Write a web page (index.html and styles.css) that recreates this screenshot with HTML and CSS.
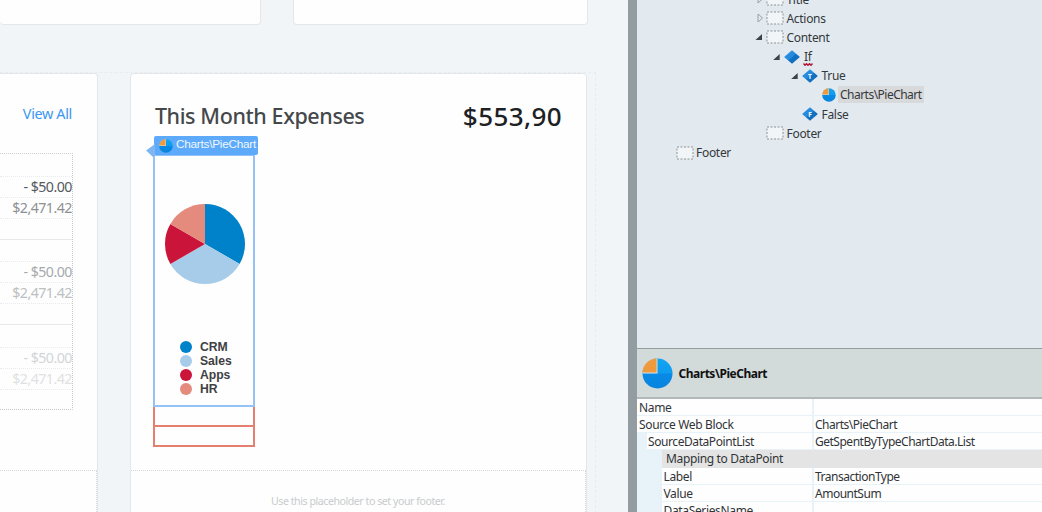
FILE: index.html
```html
<!DOCTYPE html>
<html lang="en">
<head>
<meta charset="utf-8">
<title>Charts\PieChart</title>
<link rel="stylesheet" href="styles.css">
</head>
<body>
<svg class="defs" width="0" height="0">
  <defs>
    <linearGradient id="blue" x1="0" y1="0" x2="0" y2="1"><stop offset="0" stop-color="#12a4f3"/><stop offset=".49" stop-color="#0f9bee"/><stop offset=".51" stop-color="#088ae6"/><stop offset="1" stop-color="#0784de"/></linearGradient>
    <linearGradient id="gem" x1="0" y1="0" x2="1" y2="1"><stop offset="0" stop-color="#2b95e6"/><stop offset=".5" stop-color="#2388dc"/><stop offset=".52" stop-color="#1272c4"/><stop offset="1" stop-color="#0f68b6"/></linearGradient>
    <symbol id="pie" viewBox="0 0 32 32"><circle cx="16" cy="16" r="15.5" fill="url(#blue)"/><path d="M.5 16A15.5 15.5 0 0 1 16 .5V16Z" fill="#d3e3ea"/><path d="M15 .5V15H.5A15 15 0 0 1 15 .5Z" fill="#f09a3e"/></symbol>
    <symbol id="diamond" viewBox="0 0 16 14"><path d="M8 .2 15.9 7 8 13.8.1 7Z" fill="url(#gem)"/></symbol>
    <symbol id="slot" viewBox="0 0 18 14"><rect x="1" y="1" width="16" height="12" fill="#f1f5f8" stroke="#8d9396" stroke-dasharray="2 1.5"/></symbol>
  </defs>
</svg>
<div class="app">
  <main class="canvas">
    <div class="row-top">
      <div class="card top-a"></div>
      <div class="card top-b"></div>
    </div>
    <div class="row-main">
      <section class="card history">
        <div class="history-body">
          <a class="view-all">View All</a>
          <div class="table">
            <div class="record"><i></i><p class="amount">- $50.00</p><p class="balance">$2,471.42</p><i></i></div>
            <div class="record faded"><i></i><p class="amount">- $50.00</p><p class="balance">$2,471.42</p><i></i></div>
            <div class="record ghost"><i></i><p class="amount">- $50.00</p><p class="balance">$2,471.42</p><i></i></div>
          </div>
        </div>
        <div class="card-footer"></div>
      </section>
      <section class="card expenses">
        <div class="expenses-body">
          <header class="expenses-head"><h2>This Month Expenses</h2><strong>$553,90</strong></header>
          <div class="widget">
            <div class="tag"><svg class="tag-pie"><use href="#pie"/></svg><span>Charts\PieChart</span></div>
            <svg class="tag-tail" viewBox="0 0 9 13"><path d="M9 0V11L7 13 0 6.5Z" fill="#7eb6f3"/></svg>
            <svg class="chart" viewBox="-41 -41 82 82">
              <path d="M0 0V-40A40 40 0 0 1 34.64 20Z" fill="#0082cb"/>
              <path d="M0 0 34.64 20A40 40 0 0 1-34.64 20Z" fill="#a6cce9"/>
              <path d="M0 0-34.64 20A40 40 0 0 1-34.64-20Z" fill="#cb1439"/>
              <path d="M0 0-34.64-20A40 40 0 0 1 0-40Z" fill="#e48b7d"/>
            </svg>
            <ul class="legend"><li class="crm">CRM</li><li class="sales">Sales</li><li class="apps">Apps</li><li class="hr">HR</li></ul>
          </div>
          <div class="slots"><div></div><div></div></div>
        </div>
        <div class="card-footer"><span>Use this placeholder to set your footer.</span></div>
      </section>
      <div class="row-edge"></div>
    </div>
  </main>
  <aside class="side">
    <div class="tree">
      <div class="node l1"><svg class="exp" viewBox="0 0 10 10"><path d="M2.5 1 7 5 2.5 9Z" class="closed"/></svg><svg class="slot"><use href="#slot"/></svg><span>Title</span></div>
      <div class="node l1"><svg class="exp" viewBox="0 0 10 10"><path d="M2.5 1 7 5 2.5 9Z" class="closed"/></svg><svg class="slot"><use href="#slot"/></svg><span>Actions</span></div>
      <div class="node l1"><svg class="exp" viewBox="0 0 10 10"><path d="M6.5 2V8H0Z" class="open"/></svg><svg class="slot"><use href="#slot"/></svg><span>Content</span></div>
      <div class="node l2"><svg class="exp" viewBox="0 0 10 10"><path d="M6.2 2V8H-.3Z" class="open"/></svg><svg class="gem"><use href="#diamond"/></svg><span class="error">If<svg class="squiggle" viewBox="0 0 10 3"><path d="M.5.5 2 2.3 3.5.7 5 2.3 6.5.7 8 2.3 9.5.5"/></svg></span></div>
      <div class="node l3"><svg class="exp" viewBox="0 0 10 10"><path d="M6.2 2V8H-.3Z" class="open"/></svg><svg class="gem" viewBox="0 0 16 14"><use href="#diamond" width="16" height="14"/><text x="8" y="9.6">T</text></svg><span>True</span></div>
      <div class="node l4"><svg class="mini-pie"><use href="#pie"/></svg><span class="selected">Charts\PieChart</span></div>
      <div class="node l3"><i class="exp"></i><svg class="gem" viewBox="0 0 16 14"><use href="#diamond" width="16" height="14"/><text x="8" y="9.6">F</text></svg><span>False</span></div>
      <div class="node l1"><i class="exp"></i><svg class="slot"><use href="#slot"/></svg><span>Footer</span></div>
      <div class="node l0"><i class="exp"></i><svg class="slot"><use href="#slot"/></svg><span>Footer</span></div>
    </div>
    <div class="prop-head"><svg><use href="#pie"/></svg><b>Charts\PieChart</b></div>
    <div class="props">
      <div class="prop"><label>Name</label><span></span></div>
      <div class="prop"><label>Source Web Block</label><span>Charts\PieChart</span></div>
      <div class="prop in1"><label>SourceDataPointList</label><span>GetSpentByTypeChartData.List</span></div>
      <div class="prop in2 group"><label>Mapping to DataPoint</label></div>
      <div class="prop in2"><label>Label</label><span>TransactionType</span></div>
      <div class="prop in2"><label>Value</label><span>AmountSum</span></div>
      <div class="prop in2"><label>DataSeriesName</label><span></span></div>
    </div>
  </aside>
</div>
</body>
</html>
```
FILE: styles.css
```css
* { box-sizing: border-box; }
body { margin: 0; overflow: hidden; font-family: "Noto Sans", "Open Sans", sans-serif; }
h2, p, ul { margin: 0; padding: 0; }
svg { display: block; flex: none; }
.defs { position: absolute; }
.app { display: flex; width: 1042px; height: 512px; overflow: hidden; }

.canvas { width: 628px; flex: none; background: #f1f5f8; }
.card { background: #fefefe; border: 1px solid #e4e7ea; border-radius: 4px; }
.row-top { display: flex; gap: 32px; height: 25px; }
.row-top .card { border-top: 0; border-top-left-radius: 0; border-top-right-radius: 0; }
.top-a { width: 261px; border-left: 0; }
.top-b { width: 295px; }
.row-main { display: flex; width: 596px; height: 441px; margin-top: 47px; border-top: 1px dashed #e8ecee; }
.row-edge { width: 9px; border-right: 1px dashed #e8ecee; }

.history { width: 98px; margin-right: 32px; border-left: 0; border-top-left-radius: 0; border-bottom-left-radius: 0; border-bottom-right-radius: 0; }
.history-body { height: 396px; padding: 30px 24px 0 0; }
.view-all { display: block; height: 20px; line-height: 20px; font-size: 14.4px; letter-spacing: -.35px; padding-right: 1px; text-align: right; color: #3d97f0; white-space: nowrap; }
.table { height: 257px; margin-top: 29px; border-top: 1px dotted #cfd1d3; border-right: 1px dotted #c5c7c9; border-bottom: 1px dotted #c8cacc; }
.record { height: 85.5px; border-bottom: 1px solid #e7e8e9; font-size: 14.2px; letter-spacing: -.53px; text-align: right; white-space: nowrap; }
.record:last-child { border-bottom: 0; }
.record i { display: block; height: 21.5px; }
.record p { height: 21.2px; line-height: 19px; border-top: 1px dotted #e8eaeb; }
.record p + i { border-top: 1px dotted #e8eaeb; }
.amount { color: #55595c; }
.balance { color: #8e9193; }
.faded .amount { color: #a7aaac; }
.faded .balance { color: #bcbfc1; }
.ghost .amount { color: #d3d5d7; }
.ghost .balance { color: #dfe1e2; }
.card-footer { height: 44px; padding-top: 22px; border-top: 1px dotted #d5d7d9; border-right: 1px dotted #d5d7d9; text-align: center; }
.card-footer span { display: block; line-height: 16px; font-size: 10.6px; letter-spacing: -.45px; color: #c9cbcd; }

.expenses { width: 457.5px; border-bottom-left-radius: 0; border-bottom-right-radius: 0; }
.expenses-body { height: 396px; padding: 25px 24px 0 23px; }
.expenses-head { display: flex; justify-content: space-between; height: 34px; line-height: 34px; white-space: nowrap; }
.expenses-head h2 { padding-left: 1px; font-size: 21.5px; font-weight: 500; letter-spacing: -.4px; color: #44484b; }
.expenses-head strong { font-size: 26px; font-weight: 500; letter-spacing: .4px; color: #1d2124; }
.widget { position: relative; width: 102px; height: 253px; margin: 21px 0 0 -1px; padding: 47px 0 0 9px; border: 2px solid #94c1f6; }
.tag { position: absolute; left: -1px; top: -20px; display: flex; align-items: center; width: 104px; height: 19px; padding-left: 5px; border-radius: 2px; background: #5caaf9; color: #eff7ff; font: 11.8px/17px "Liberation Sans", sans-serif; letter-spacing: -.25px; }
.tag span { height: 19px; }
.tag-pie { width: 14px; height: 14px; margin-right: 3px; }
.tag-tail { position: absolute; left: -9px; top: -12px; width: 9px; height: 13px; }
.chart { width: 82px; height: 82px; }
.legend { list-style: none; padding: 55px 0 0 16px; font: bold 12.2px/14px "Liberation Sans", sans-serif; color: #3e4144; }
.legend li { display: flex; align-items: center; gap: 8px; height: 14px; }
.legend li::before { content: ""; width: 12px; height: 12px; border-radius: 50%; background: currentColor; }
.crm::before { color: #0082cb; }
.sales::before { color: #a6cce9; }
.apps::before { color: #cb1439; }
.hr::before { color: #e48b7d; }
.slots { width: 102px; margin-left: -1px; border: solid #e3806f; border-width: 0 2px; }
.slots div { height: 20px; border-bottom: 2px solid #e3806f; }

.side { display: flex; flex-direction: column; width: 414px; flex: none; border-left: 9px solid #939da1; background: #e2eaf0; }
.tree { height: 348px; overflow: hidden; font-size: 12px; letter-spacing: -.3px; color: #34383b; }
.node { display: flex; align-items: center; height: 19.2px; white-space: nowrap; }
.node:first-child { margin-top: -10.6px; }
.l0 { padding-left: 27.5px; }
.l1 { padding-left: 118px; }
.l2 { padding-left: 136px; }
.l3 { padding-left: 153.5px; }
.l4 { padding-left: 184.5px; }
.exp { width: 11px; height: 10px; }
.closed { fill: none; stroke: #9ba1a4; }
.open { fill: #3e4346; }
.slot { width: 18px; height: 14px; margin-right: 2.5px; }
.gem { width: 16px; height: 14px; margin-right: 4px; }
.gem text { fill: #fff; font: bold 6.5px "Noto Sans", sans-serif; text-anchor: middle; letter-spacing: 0; }
.error { position: relative; }
.squiggle { position: absolute; left: -1px; bottom: -1px; width: 10px; height: 3px; fill: none; stroke: #b3173a; stroke-width: 1.4; }
.mini-pie { width: 14px; height: 14px; margin: 0 2.5px 0 0; }
.selected { height: 17px; padding: 0 2px; line-height: 17px; letter-spacing: -.52px; background: #d8d9da; }

.prop-head { display: flex; align-items: center; gap: 5px; height: 51px; padding-left: 5px; border-top: 1px solid #969b9e; border-bottom: 2px solid #b2b7b9; background: #d2dada; color: #111; font-size: 12px; letter-spacing: -.48px; }
.prop-head svg { width: 31px; height: 31px; }
.prop-head b { padding-left: .5px; }
.props { height: 113px; background: #e7f3f9; font-size: 12px; letter-spacing: -.35px; color: #313437; }
.prop { display: flex; gap: 2px; height: 17px; padding-bottom: 1px; line-height: 17px; white-space: nowrap; }
.prop label { width: 175px; padding-left: 2px; background: #fefefe; }
.prop span { flex: 1; padding-left: 1px; letter-spacing: -.49px; background: #fefefe; }
.in1 { padding-left: 10px; }
.in1 label { width: 165px; padding-left: 1px; letter-spacing: -.42px; }
.in2 { padding-left: 25px; }
.in2 label { width: 150px; padding-left: 1.5px; }
.group { height: 17.5px; padding-bottom: 0; }
.group label { width: auto; flex: 1; padding-left: 4px; background: #e4e4e4; line-height: 18px; }
```
